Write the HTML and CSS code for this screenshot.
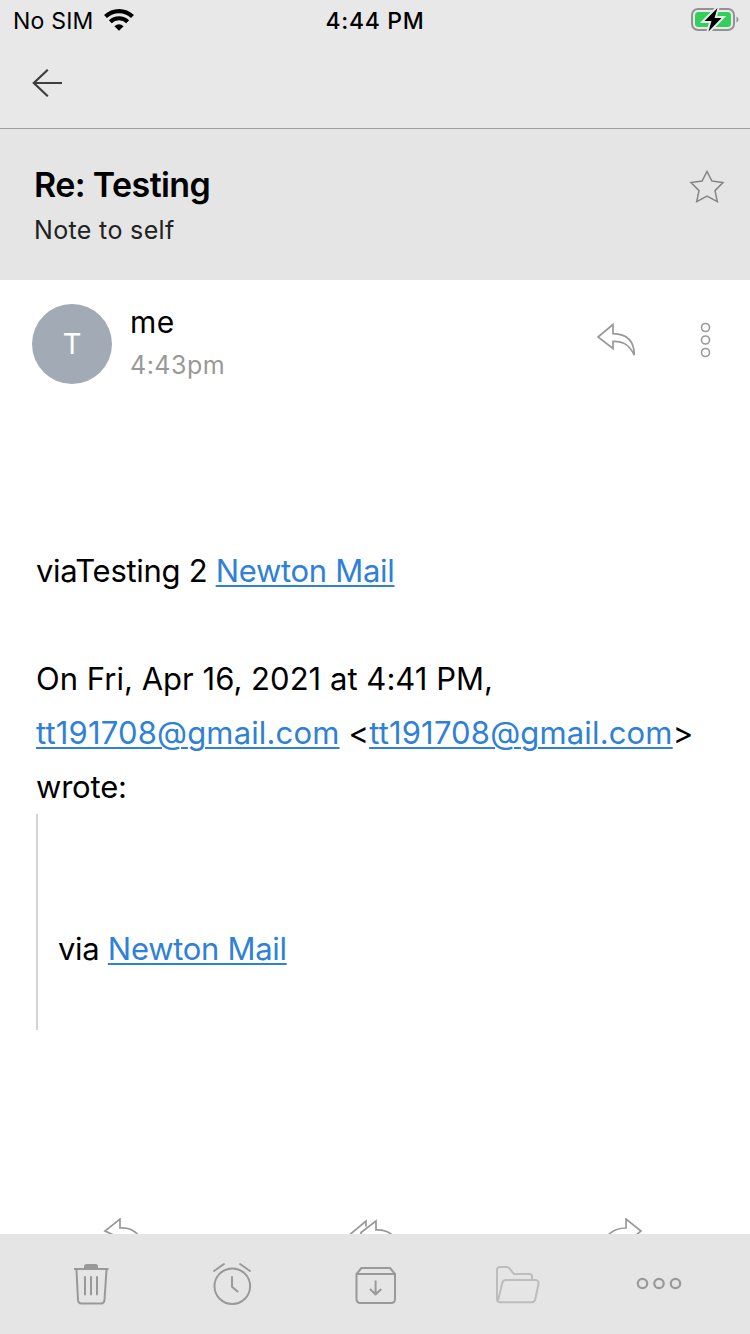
FILE: index.html
```html
<!DOCTYPE html>
<html lang="en">
<head>
<meta charset="utf-8">
<title>Re: Testing</title>
<link rel="stylesheet" href="styles.css">
</head>
<body>
<div class="screen">
  <header class="top">
    <div class="status">
      <div class="carrier">
        <span class="sim">No SIM</span>
        <svg class="wifi" width="30" height="22" viewBox="0 0 30 22">
          <g fill="none" stroke="#000">
            <path d="M1.500 7.600A19.500 19.500 0 0 1 28.500 7.600" stroke-width="4.200"/>
            <path d="M6.300 12.800A12.400 12.400 0 0 1 23.700 12.800" stroke-width="4"/>
          </g>
          <path d="M10.400 17.200Q15 13.200 19.600 17.200L15 21.800Z"/>
        </svg>
      </div>
      <span class="clock">4:44 PM</span>
      <svg class="battery" width="50" height="26" viewBox="0 0 50 26">
        <rect x="2" y="2" width="42" height="21" rx="6" fill="none" stroke="#929292" stroke-width="2"/>
        <rect x="5" y="5" width="36" height="15" rx="3.500" fill="#33cf5c"/>
        <path d="M46.500 9.500Q48.500 10.500 48.500 12.500T46.500 15.500Z" fill="#929292"/>
        <path d="M27.500 1L14.500 14H21.500L18.500 24.500L31.500 11H24.500Z" fill="#000" stroke="#e8e8e8" stroke-width="4" paint-order="stroke"/>
      </svg>
    </div>
    <nav class="nav">
      <svg width="32" height="30" viewBox="0 0 32 30" fill="none" stroke="#3e3e3e" stroke-width="2.200">
        <path d="M16.800 1.700L2.800 15L16.800 28.300M2.500 15H31"/>
      </svg>
    </nav>
  </header>

  <section class="subject">
    <div>
      <h1 class="title">Re: Testing</h1>
      <p class="note">Note to self</p>
    </div>
    <svg class="star" width="36" height="36" viewBox="0 0 36 36" fill="none" stroke="#858585" stroke-width="1.500">
      <path d="M18 2.300L22.900 12L34 13.500L26 21.600L28.300 32.600L18 27L7.700 32.600L10 21.600L2 13.500L13.100 12Z"/>
    </svg>
  </section>

  <main class="message">
    <div class="sender">
      <div class="avatar">T</div>
      <div class="from">
        <div class="name">me</div>
        <div class="time">4:43pm</div>
      </div>
      <svg class="reply" width="40" height="36" viewBox="0 0 40 36" fill="none" stroke="#999" stroke-width="1.700">
        <path d="M17 2.500L2 15L17 26.500V19.300C27 19 33 22.500 38.300 33C38.200 17.500 30 12 17 11.700Z"/>
      </svg>
      <svg class="kebab" width="14" height="38" viewBox="0 0 14 38" fill="none" stroke="#999" stroke-width="1.600">
        <circle cx="7.500" cy="6.500" r="4"/><circle cx="7.500" cy="19" r="4"/><circle cx="7.500" cy="31.500" r="4"/>
      </svg>
    </div>

    <div class="content">
      <p class="line via">viaTesting 2 <a class="link" href="#">Newton Mail</a></p>
      <p class="line">&nbsp;</p>
      <p class="line date">On Fri, Apr 16, 2021 at 4:41 PM,</p>
      <p class="line mail"><a class="link" href="#">tt191708@gmail.com</a> &lt;<a class="link" href="#">tt191708@gmail.com</a>&gt;</p>
      <p class="line wrote">wrote:</p>
      <blockquote class="quote"><p class="line via">via <a class="link" href="#">Newton Mail</a></p></blockquote>
    </div>

    <div class="actions">
      <svg width="40" height="16" viewBox="102 1218 40 16" fill="none" stroke="#999" stroke-width="1.700">
        <path d="M120 1246V1238L105 1231L120 1219V1228Q132 1227 139 1236"/>
      </svg>
      <svg class="reply-all" width="48" height="16" viewBox="348 1218 48 16" fill="none" stroke="#999" stroke-width="1.700">
        <path d="M350 1234.500L366 1221V1226.500M361 1235V1232.500L376 1221V1230Q386 1229.500 393 1235.500"/>
      </svg>
      <svg class="forward" width="40" height="16" viewBox="605 1218 40 16" fill="none" stroke="#999" stroke-width="1.700">
        <path d="M608 1235Q615 1228 626 1228V1219L641 1231L635 1236"/>
      </svg>
    </div>
  </main>

  <footer class="toolbar">
    <svg width="40" height="46" viewBox="71 1261 40 46" fill="none" stroke="#999" stroke-width="2" stroke-linecap="round">
      <path d="M74 1269H108.500" stroke-linecap="butt" stroke-width="2.200"/>
      <path d="M84 1268.500V1266.500Q84 1264 86.500 1264H95.500Q98 1264 98 1266.500V1268.500Z" fill="#999" stroke="none"/>
      <path d="M76.500 1270L78 1300Q78.200 1303.500 81.500 1303.500H101Q104.200 1303.500 104.500 1300L106.500 1270M85 1277V1294.500M91 1277V1294.500M97 1277V1294.500"/>
    </svg>
    <svg class="snooze" width="44" height="46" viewBox="210 1261 44 46" fill="none" stroke="#999" stroke-width="2" stroke-linecap="round">
      <circle cx="232.300" cy="1286.200" r="17.800"/>
      <path d="M232 1277V1286.800L237.500 1291.500M214 1271L224 1264M240 1264L250 1271"/>
    </svg>
    <svg class="archive" width="44" height="46" viewBox="354 1261 44 46" fill="none" stroke="#999" stroke-width="2" stroke-linejoin="round">
      <path d="M356.500 1274L361.500 1268H390L395 1274V1299Q395 1303 391 1303H360.500Q356.500 1303 356.500 1299ZM356.500 1274H395M375.600 1280.500V1294M370 1289L375.600 1294.500L381.200 1289"/>
    </svg>
    <svg class="folder" width="46" height="46" viewBox="495 1261 46 46" fill="none" stroke="#bdbdbd" stroke-width="2" stroke-linejoin="round">
      <path d="M532 1279V1276.500Q532 1274 529.500 1274H514L509.500 1268.500Q508.500 1267 506.500 1267H500Q497 1267 497 1270V1299Q497 1302.300 500.500 1302.300H531.500Q534.500 1302.300 535.200 1299.500L538.500 1284Q539 1280 535.500 1280H506Q503 1280 502.200 1283L498.200 1300"/>
    </svg>
    <svg class="more" width="48" height="16" viewBox="635 1276 48 16" fill="none" stroke="#999" stroke-width="2.200">
      <circle cx="642.500" cy="1283.500" r="4.700"/><circle cx="659" cy="1283.500" r="4.700"/><circle cx="675.500" cy="1283.500" r="4.700"/>
    </svg>
  </footer>
</div>
</body>
</html>
```
FILE: styles.css
```css
* { box-sizing: border-box; }
body, h1, p, blockquote { margin: 0; }
body { background: #fff; color: #000; font-family: Inter, "Liberation Sans", sans-serif; }
svg { display: block; flex: none; }
.screen { display: flex; flex-direction: column; width: 750px; height: 1334px; overflow: hidden; }
.top { height: 129px; background: #e8e8e8; border-bottom: 1px solid #9c9c9c; }
.status { display: grid; grid-template-columns: 1fr auto 1fr; align-items: center; height: 40px; padding: 0 10px 0 13px; }
.carrier { display: flex; align-items: center; gap: 10px; }
.sim { font-size: 23px; line-height: 38px; letter-spacing: 0.2px; padding-top: 2px; }
.clock { font-size: 23px; font-weight: 500; line-height: 38px; letter-spacing: 0.7px; padding-top: 2px; margin-right: 3px; }
.battery { justify-self: end; }
.nav { display: flex; align-items: center; height: 86px; padding-left: 31px; }
.subject { display: flex; justify-content: space-between; height: 151px; padding: 35px 25px 0 34px; background: #e5e5e5; }
.title { font-size: 34px; font-weight: 600; line-height: 42px; letter-spacing: -0.6px; }
.note { margin-top: 7px; color: #222; font-size: 25px; line-height: 34px; letter-spacing: 0.35px; }
.star { margin-top: 5px; }
.message { display: flex; flex-direction: column; flex: 1; min-height: 0; }
.sender { display: flex; height: 264px; padding: 23px 38px 0 32px; }
.avatar { width: 80px; height: 80px; margin-top: 1px; border-radius: 50%; background: #a2abb5; color: #fff; font-size: 29px; line-height: 80px; text-align: center; }
.from { flex: 1; padding-left: 18px; }
.name { font-size: 30px; line-height: 38px; letter-spacing: 0.4px; }
.time { margin-top: 6px; color: #999; font-size: 25px; line-height: 36px; letter-spacing: 0.5px; }
.reply { margin: 19px 62px 0 0; }
.kebab { margin-top: 18px; }
.content { padding: 0 36px; }
.line { height: 54px; font-size: 31px; line-height: 54px; white-space: nowrap; }
.via { letter-spacing: -0.3px; }
.date { letter-spacing: 0.03px; }
.mail { letter-spacing: 0.16px; }
.wrote { letter-spacing: -0.2px; }
.link { color: #2f80d8; text-decoration: underline; text-decoration-thickness: 2px; text-underline-offset: 3px; }
.quote { height: 216px; padding: 108px 0 0 20px; border-left: 2px solid #d4d4d4; }
.actions { display: flex; margin-top: auto; padding-left: 102px; }
.reply-all { margin-left: 206px; }
.forward { margin-left: 209px; }
.toolbar { display: flex; align-items: center; height: 100px; padding-left: 71px; background: #e5e5e5; }
.snooze { margin-left: 99px; }
.archive { margin-left: 100px; }
.folder { margin-left: 97px; }
.more { margin-left: 94px; }
```
